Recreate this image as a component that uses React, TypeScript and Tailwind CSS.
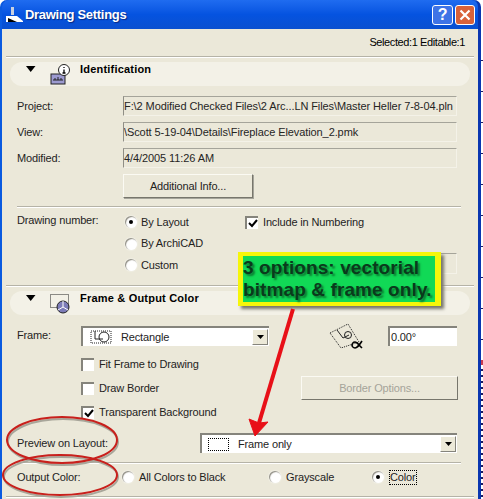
const Triangle = () => (
  <svg width="10" height="6" viewBox="0 0 10 6" className="shrink-0">
    <path d="M0 0h9.5L4.7 6z" fill="#000" />
  </svg>
);

const Radio = ({ checked = false }: { checked?: boolean }) => (
  <span className="relative flex h-[12px] w-[12px] shrink-0 items-center justify-center rounded-full bg-white shadow-[inset_1px_1px_1px_#8d8b80,0_0_2px_#fff]">
    {checked && <span className="h-[4px] w-[4px] rounded-full bg-black" />}
  </span>
);

const Check = ({ checked = false }: { checked?: boolean }) => (
  <span className="flex h-[13px] w-[13px] shrink-0 items-center justify-center border-t-2 border-l-2 border-t-[#85847c] border-l-[#85847c] bg-white">
    {checked && (
      <svg width="10" height="9" viewBox="0 0 10 9">
        <path d="M1 4l3 3 5-6" fill="none" stroke="#000" strokeWidth="2" />
      </svg>
    )}
  </span>
);

const ReadField = ({ children }: { children?: React.ReactNode }) => (
  <div className="flex h-[20px] w-[334px] items-center overflow-hidden whitespace-nowrap border border-t-[#a5a49a] border-r-[#f4f2e8] border-b-[#f4f2e8] border-l-[#8f8e85] tracking-[-0.09px] text-[#26251f]">
    {children}
  </div>
);

const Arrow = () => (
  <span className="flex h-[16px] w-[16px] items-center justify-center border border-t-white border-l-white border-r-[#85847c] border-b-[#85847c] bg-[#ece9d8]">
    <svg width="7" height="4" viewBox="0 0 7 4">
      <path d="M0 0h7L3.5 4z" fill="#000" />
    </svg>
  </span>
);

const Pill = ({ icon, title }: { icon: React.ReactNode; title: string }) => (
  <div className="ml-[8px] mr-[8px] flex h-[24px] items-start rounded-full bg-[#f3f1e7] pl-[16px]">
    <span className="mt-[4px]">
      <Triangle />
    </span>
    <span className="ml-[14px] mt-[2px] w-[20px]">{icon}</span>
    <span className="ml-[10px] mt-[-1px] text-[11px] font-bold leading-[17px] tracking-[0.2px] text-black">{title}</span>
  </div>
);

const InfoIcon = () => (
  <svg width="20" height="22" viewBox="0 0 20 22">
    <rect x="1" y="10" width="14" height="10" fill="#9c9ad0" stroke="#222" strokeWidth="1" />
    <path d="M3 16h10M5 14v2M8 13v3M11 14v2" stroke="#222" strokeWidth="1" fill="none" />
    <circle cx="14" cy="6" r="5.5" fill="#fff" stroke="#222" />
    <path d="M14 3v1M14 5.5V9M12.5 9h3" stroke="#000" strokeWidth="1.3" fill="none" />
  </svg>
);

const FrameIcon = () => (
  <svg width="20" height="22" viewBox="0 0 20 22">
    <rect x="0.5" y="1.5" width="18" height="13" fill="none" stroke="#222" strokeDasharray="1 1" />
    <circle cx="13" cy="14" r="6" fill="#7d7cb8" stroke="#222" />
    <path d="M13 8v6l5 3M13 14l-5 3" stroke="#fff" fill="none" />
  </svg>
);

const ShapeIcon = () => (
  <svg width="22" height="14" viewBox="0 0 22 14">
    <path d="M1 1h20v12H1z" fill="none" stroke="#222" strokeDasharray="1 1" />
    <path d="M5 1v8h8" fill="none" stroke="#222" />
    <circle cx="14" cy="7" r="5" fill="none" stroke="#222" />
  </svg>
);

const RotatedIcon = () => (
  <svg width="34" height="28" viewBox="0 0 34 28" className="shrink-0">
    <path d="M1 11L19 2l11 18-18 6z" fill="none" stroke="#222" strokeDasharray="1 1" />
    <path d="M8 8l6 8 6-3" fill="none" stroke="#222" />
    <circle cx="19" cy="13" r="3.5" fill="none" stroke="#222" />
    <path d="M33 19c-4 6-5 7-7 7s-3-2-3-3 1-3 3-3 3 2 7 6" fill="none" stroke="#000" strokeWidth="1.6" />
  </svg>
);

const App = () => {
  return (
    <div className="relative h-[499px] w-[483px] overflow-hidden bg-white text-[11px] leading-[13px] tracking-[-0.15px] text-[#24231d] [font-family:'Liberation_Sans',sans-serif]">
      <div className="flex h-[499px] w-[481px] flex-col rounded-t-[7px] border-r-[3px] border-l-2 border-r-[#0a36b0] border-l-[#0a5ae0] bg-[#0a50d8]">
        {/* title bar */}
        <div className="flex h-[29px] shrink-0 items-center rounded-t-[7px] bg-gradient-to-b from-[#1f6cf0] via-[#0553e0] to-[#0a50d0] pl-[3px] pr-[3px]">
          <svg width="18" height="18" viewBox="0 0 18 18" className="shrink-0">
            <path d="M6 1h3v8H6z" fill="#c8d0e0" />
            <path d="M1 10h11l6 5v1H1z" fill="#fff" />
            <path d="M3 12l9 4H3z" fill="#000" />
          </svg>
          <span className="ml-[2px] text-[13px] font-bold tracking-[-0.3px] text-white [text-shadow:1px_1px_1px_#0a2a80]">Drawing Settings</span>
          <div className="ml-auto flex gap-[2px]">
            <span className="flex h-[20px] w-[21px] items-center justify-center rounded-[3px] border border-white bg-[#3f74e6] text-[16px] font-bold leading-none text-white">?</span>
            <span className="flex h-[20px] w-[20px] items-center justify-center rounded-[3px] border border-white bg-[#d9623a]">
              <svg width="12" height="12" viewBox="0 0 12 12">
                <path d="M1.5 1.5l9 9M10.5 1.5l-9 9" stroke="#fff" strokeWidth="2.2" />
              </svg>
            </span>
          </div>
        </div>

        <div className="flex flex-1 flex-col bg-[#ebe8d9]">
          <div className="flex h-[27px] shrink-0 items-center justify-end pr-[13px] tracking-[-0.4px] text-black">Selected:1 Editable:1</div>
          <div className="mx-[4px] h-px shrink-0 bg-[#b5b3a7] shadow-[0_1px_0_#fff]" />

          <div className="mt-[5px]">
            <Pill icon={<InfoIcon />} title="Identification" />
          </div>

          <div className="mt-[10px] flex flex-col gap-[6px] pl-[15px]">
            <div className="flex items-center">
              <span className="w-[106px]">Project:</span>
              <ReadField>F:\2 Modified Checked Files\2 Arc...LN Files\Master Heller 7-8-04.pln</ReadField>
            </div>
            <div className="flex items-center">
              <span className="w-[106px]">View:</span>
              <ReadField>\Scott 5-19-04\Details\Fireplace Elevation_2.pmk</ReadField>
            </div>
            <div className="flex items-center">
              <span className="w-[106px]">Modified:</span>
              <ReadField>4/4/2005 11:26 AM</ReadField>
            </div>
            <div className="flex pl-[106px]">
              <button className="h-[24px] w-[130px] border border-t-[#fbfaf3] border-l-[#fbfaf3] border-r-[#77766c] border-b-[#77766c] bg-[#ebe8d9] shadow-[1px_1px_0_#a5a49a]">Additional Info...</button>
            </div>
          </div>

          <div className="ml-[15px] mr-[17px] mt-[8px] h-px shrink-0 bg-[#b5b3a7] shadow-[0_1px_0_#fff]" />

          <div className="flex h-[78px] shrink-0 pl-[15px] pt-[7px]">
            <span className="w-[108px]">Drawing number:</span>
            <div className="flex w-[120px] flex-col gap-[8.5px] pt-[1.5px]">
              <div className="flex items-center gap-[4px]"><Radio checked />By Layout</div>
              <div className="flex items-center gap-[4px]"><Radio />By ArchiCAD</div>
              <div className="flex items-center gap-[4px]"><Radio />Custom</div>
            </div>
            <div className="flex h-[17px] items-center gap-[5px]"><Check checked />Include in Numbering</div>
          </div>

          <div className="mx-[4px] h-px shrink-0 bg-[#b5b3a7] shadow-[0_1px_0_#fff]" />
          <div className="mt-[5px]">
            <Pill icon={<FrameIcon />} title="Frame & Output Color" />
          </div>

          <div className="mt-[11px] flex pl-[15px]">
            <div className="w-[64px] leading-[18px]">Frame:</div>
            <div className="flex w-[220px] flex-col">
              <div className="flex h-[20px] w-[188px] items-center border-t-2 border-l-2 border-t-[#85847c] border-l-[#85847c] bg-white pl-[7px] pr-px">
                <ShapeIcon />
                <span className="ml-[9px]">Rectangle</span>
                <span className="ml-auto"><Arrow /></span>
              </div>
              <div className="mt-[12px] flex items-center gap-[5px]"><Check />Fit Frame to Drawing</div>
              <div className="mt-[11px] flex items-center gap-[5px]"><Check />Draw Border</div>
              <div className="mt-[11px] flex items-center gap-[5px]"><Check checked />Transparent Background</div>
            </div>
            <div className="flex flex-col">
              <div className="flex h-[20px] items-center pl-[28px]">
                <RotatedIcon />
                <div className="ml-[25px] flex h-[20px] w-[69px] items-center border-t-2 border-l-2 border-t-[#85847c] border-l-[#85847c] bg-white pl-[1px]">0.00°</div>
              </div>
              <button className="mt-[30px] h-[24px] w-[157px] border border-t-[#fbfaf3] border-l-[#fbfaf3] border-r-[#77766c] border-b-[#77766c] text-[#a5a49a]">Border Options...</button>
            </div>
          </div>

          <div className="mt-[14px] flex items-center pl-[15px]">
            <span className="w-[183px]">Preview on Layout:</span>
            <div className="flex h-[20px] w-[257px] items-center border-t-2 border-l-2 border-t-[#85847c] border-l-[#85847c] bg-white pl-[6px] pr-px">
              <span className="h-[13px] w-[21px] border border-dotted border-black" />
              <span className="ml-[9px]">Frame only</span>
              <span className="ml-auto"><Arrow /></span>
            </div>
          </div>

          <div className="ml-[15px] mr-[17px] mt-[9px] h-px shrink-0 bg-[#b5b3a7] shadow-[0_1px_0_#fff]" />

          <div className="mt-[4px] flex h-[20px] shrink-0 items-center pl-[15px]">
            <span className="w-[105px]">Output Color:</span>
            <div className="flex w-[147px] items-center gap-[5px]"><Radio />All Colors to Black</div>
            <div className="flex w-[103px] items-center gap-[5px]"><Radio />Grayscale</div>
            <div className="flex items-center gap-[5px]"><Radio checked /><span className="border border-dotted border-black">Color</span></div>
          </div>

          <div className="mx-[4px] mt-[9px] h-px shrink-0 bg-[#b5b3a7] shadow-[0_1px_0_#fff]" />
        </div>
      </div>

      {/* custom number field, mostly behind the note */}
      <div className="absolute left-[420px] top-[253px] h-[21px] w-[37px] border border-[#a5a49a] border-r-[#f4f2e8] border-b-[#f4f2e8]" />

      {/* note */}
      <div className="absolute left-[238px] top-[252px] w-[203px] border-y-[4px] border-r-[6px] border-l-[5px] border-[#f6f60a] bg-[#11d956] py-[1px] text-[19px] font-bold leading-[22px] tracking-[0.1px] text-[#0a3a1c] shadow-[3px_3px_3px_#77766c] [text-shadow:2px_2px_2px_#0a7a30]">
        <div className="whitespace-nowrap">3 options: vectorial</div>
        <div className="whitespace-nowrap">bitmap &amp; frame only.</div>
      </div>

      {/* markup drawn over the dialog */}
      <svg className="pointer-events-none absolute left-0 top-0" width="483" height="499" viewBox="0 0 483 499">
        <g fill="none" stroke="#a8a69a" strokeWidth="2" transform="translate(1 2)">
          <ellipse cx="62" cy="440" rx="55" ry="23" />
          <ellipse cx="60" cy="475" rx="57" ry="20" />
        </g>
        <g fill="none" stroke="#c8201c" strokeWidth="2">
          <ellipse cx="62" cy="440" rx="55" ry="23" />
          <ellipse cx="60" cy="475" rx="57" ry="20" />
        </g>
        <path d="M293 309L259 423" stroke="#e81018" strokeWidth="4" />
        <path d="M249 419l10 4 9-1-13 14z" fill="#e81018" stroke="#e81018" strokeWidth="1" />
      </svg>

      {/* desktop showing at the right edge */}
      <div className="absolute right-0 top-[30px] h-[330px] w-[2px] bg-[repeating-linear-gradient(180deg,#ffffff_0,#ffffff_30px,#1a1a60_30px,#1a1a60_31px)]" />
      <div className="absolute right-0 top-[360px] h-[5px] w-[2px] bg-[#c83a50]" />
      <div className="absolute right-0 top-[365px] h-[134px] w-[2px] bg-[repeating-linear-gradient(180deg,#ffffff_0,#ffffff_4px,#1a1a60_4px,#1a1a60_6px)]" />
    </div>
  );
};

export default App;
